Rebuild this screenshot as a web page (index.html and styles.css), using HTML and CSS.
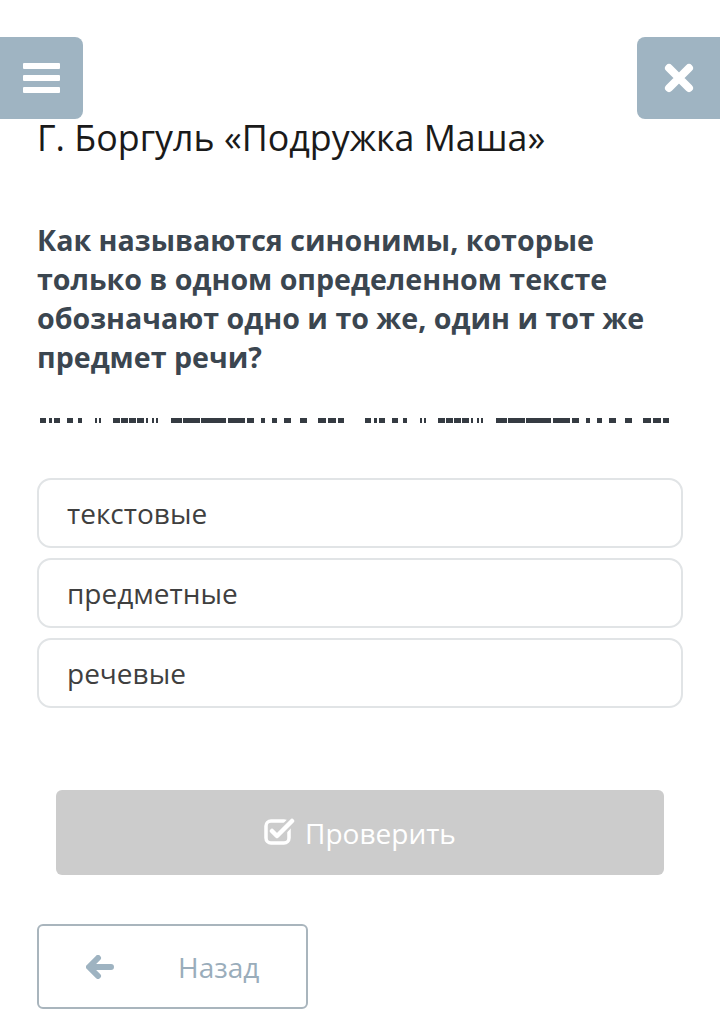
FILE: index.html
```html
<!DOCTYPE html>
<html lang="ru">
<head>
  <meta charset="UTF-8" />
  <meta name="viewport" content="width=device-width, initial-scale=1.0" />
  <title>Тест</title>
  <link rel="stylesheet" href="styles.css">
</head>
<body>

  <button class="corner-btn menu-btn" aria-label="Меню">
    <span class="bar"></span>
    <span class="bar"></span>
    <span class="bar"></span>
  </button>

  <button class="corner-btn close-btn" aria-label="Закрыть">
    <svg width="32" height="30" viewBox="0 0 32 30">
      <path d="M6 5 L26 25 M26 5 L6 25" stroke="#fff" stroke-width="8" stroke-linecap="round" fill="none"/>
    </svg>
  </button>

  <div class="page">
    <h1 class="title">Г. Боргуль «Подружка Маша»</h1>

    <p class="question">Как называются синонимы, которые только в одном определенном тексте обозначают одно и то же, один и тот же предмет речи?</p>

    <div class="cut-line"></div>

    <div class="answers">
      <div class="answer">текстовые</div>
      <div class="answer">предметные</div>
      <div class="answer">речевые</div>
    </div>

    <button class="check-btn" disabled>
      <svg width="31" height="27" viewBox="0 0 31 27">
        <rect x="2" y="3" width="23" height="22" rx="5" fill="none" stroke="#fff" stroke-width="3.5"/>
        <path d="M8 13 L13 18 L28 3" stroke="#cccccc" stroke-width="9" fill="none" stroke-linejoin="round"/>
        <path d="M8 13 L13 18 L28 3" stroke="#fff" stroke-width="4.5" fill="none" stroke-linecap="round" stroke-linejoin="round"/>
      </svg>
      <span>Проверить</span>
    </button>

    <button class="back-btn">
      <svg width="28" height="24" viewBox="0 0 28 24">
        <path d="M12 3 L3 12 L12 21 M4 12 L25 12" stroke="#9eb3c1" stroke-width="6" fill="none" stroke-linecap="round" stroke-linejoin="round"/>
      </svg>
      <span>Назад</span>
    </button>
  </div>

</body>
</html>
```

FILE: styles.css
```css
body {
  margin: 0;
  font-family: "Open Sans", "Noto Sans", sans-serif;
  background-color: #fff;
  color: #333;
}

.corner-btn {
  position: absolute;
  top: 37px;
  width: 83px;
  height: 82px;
  background-color: #9fb4c2;
  border: none;
  padding: 0;
  display: flex;
  align-items: center;
  justify-content: center;
  cursor: pointer;
}

.menu-btn {
  left: 0;
  border-radius: 0 8px 8px 0;
  flex-direction: column;
  gap: 6px;
}

.menu-btn .bar {
  display: block;
  width: 37px;
  height: 6px;
  background-color: #fff;
  border-radius: 1px;
}

.close-btn {
  right: 0;
  border-radius: 8px 0 0 8px;
}

.page {
  padding: 115px 37px 0;
}

.title {
  margin: 0;
  font-size: 35.8px;
  line-height: 44px;
  font-weight: 400;
  color: #1a1a1a;
}

.question {
  margin: 61px 0 0;
  font-size: 28.6px;
  line-height: 39px;
  font-weight: 700;
  color: #3b4650;
}

.cut-line {
  margin: 42px 0 0 3px;
  width: 646px;
  height: 5px;
  background-image: linear-gradient(90deg,
    #353b42 0 6px, transparent 6px 9px,
    #353b42 9px 12px, transparent 12px 14px,
    #353b42 14px 20px, transparent 20px 27px,
    #353b42 27px 33px, transparent 33px 38px,
    #353b42 38px 42px, transparent 42px 55px,
    #353b42 55px 57px, transparent 57px 59px,
    #353b42 59px 61px, transparent 61px 73px,
    #353b42 73px 80px, transparent 80px 81px,
    #353b42 81px 88px, transparent 88px 89px,
    #353b42 89px 96px, transparent 96px 97px,
    #353b42 97px 104px, transparent 104px 106px,
    #353b42 106px 108px, transparent 108px 112px,
    #353b42 112px 114px, transparent 114px 116px,
    #353b42 116px 118px, transparent 118px 131px,
    #353b42 131px 142px, transparent 142px 143px,
    #353b42 143px 160px, transparent 160px 161px,
    #353b42 161px 186px, transparent 186px 188px,
    #353b42 188px 205px, transparent 205px 207px,
    #353b42 207px 214px, transparent 214px 221px,
    #353b42 221px 225px, transparent 225px 232px,
    #353b42 232px 237px, transparent 237px 244px,
    #353b42 244px 251px, transparent 251px 260px,
    #353b42 260px 267px, transparent 267px 278px,
    #353b42 278px 286px, transparent 286px 288px,
    #353b42 288px 296px, transparent 296px 298px,
    #353b42 298px 304px, transparent 304px 325px);
  background-size: 325px 5px;
  background-repeat: repeat-x;
}

.answers {
  margin-top: 55px;
  display: flex;
  flex-direction: column;
  gap: 10px;
}

.answer {
  height: 70px;
  box-sizing: border-box;
  border: 2px solid #e1e4e6;
  border-radius: 14px;
  padding: 0 28px;
  display: flex;
  align-items: center;
  font-size: 28px;
  color: #3f3f3f;
}

.check-btn {
  margin: 82px 19px 0;
  width: calc(100% - 38px);
  height: 85px;
  background-color: #cccccc;
  border: none;
  border-radius: 6px;
  display: flex;
  align-items: center;
  justify-content: center;
  gap: 10px;
  font-family: inherit;
  font-size: 28px;
  color: #fff;
  padding: 0;
}

.check-btn svg {
  margin-top: -2px;
}

.back-btn {
  margin-top: 49px;
  width: 271px;
  height: 85px;
  box-sizing: border-box;
  background-color: #fff;
  border: 2px solid #a9b5bd;
  border-radius: 6px;
  display: flex;
  align-items: center;
  padding: 0 0 0 47px;
  gap: 64px;
  font-family: inherit;
  font-size: 28px;
  color: #9aadbb;
  cursor: pointer;
}
```
